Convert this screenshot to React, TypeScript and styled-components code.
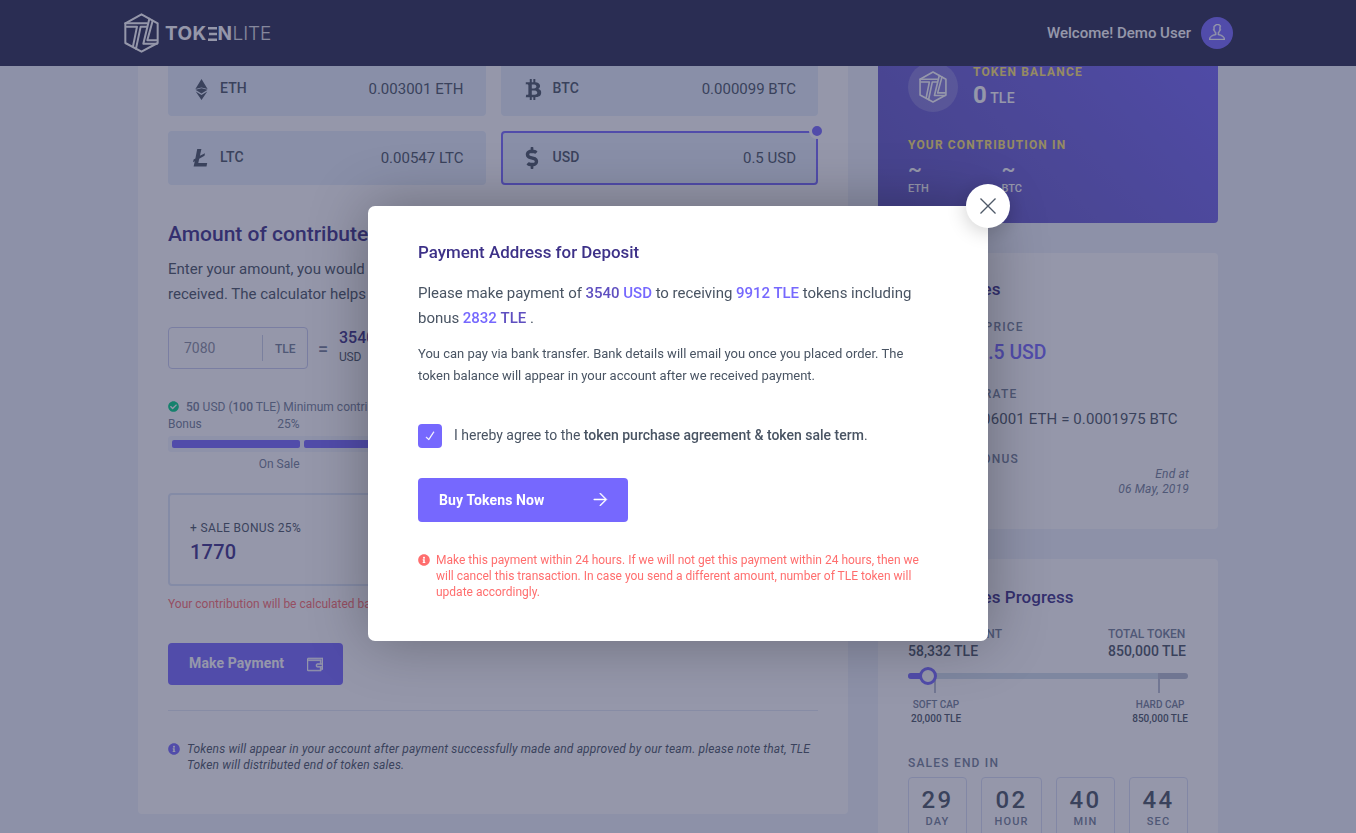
import React from "react";
import styled, { createGlobalStyle } from "styled-components";
import { FaBtc, FaDollarSign, FaInfoCircle, FaCheckCircle } from "react-icons/fa";
import { TfiUser, TfiWallet, TfiArrowRight, TfiClose, TfiCheck } from "react-icons/tfi";

const color = {
  primary: "#7668fe",
  heading: "#3d3188",
  text: "#495463",
  muted: "#728096",
  danger: "#ff6e6e",
  page: "#eef3fb",
  tile: "#e6effb",
  gold: "#ffe66d",
};

const GlobalStyle = createGlobalStyle`
  *, *::before, *::after { box-sizing: border-box; }
  html, body { margin: 0; height: 833px; overflow: hidden; }
  body { background: ${color.page}; color: ${color.text}; font-family: Roboto, sans-serif; font-size: 14px; }
  p, h2, h3, h4 { margin: 0; }
  svg { display: block; flex: none; }
`;

const Header = styled.header`
  position: fixed;
  inset: 0 0 auto 0;
  z-index: 2;
  height: 66px;
  background: #292a50;
  display: flex;
  justify-content: center;
`;
const HeaderInner = styled.div`
  width: 1110px;
  display: flex;
  align-items: center;
  justify-content: space-between;
  color: #fff;
`;
const Brand = styled.div`
  display: flex;
  align-items: center;
  gap: 6px;
  padding-left: 1px;
`;
const Wordmark = styled.div`
  display: flex;
  align-items: center;
  padding-top: 1px;
  font: 700 19px/20px Inter, sans-serif;
`;
const BoldWord = styled.span`
  letter-spacing: 0.4px;
`;
const LightWord = styled.span`
  font-weight: 300;
  opacity: 0.85;
  letter-spacing: -0.1px;
  margin-left: 0.5px;
`;
const TripleBar = styled.svg`
  margin: 0 1px 0 1px;
`;
const UserArea = styled.div`
  display: flex;
  align-items: center;
  gap: 10px;
  font-size: 15px;
  font-weight: 500;
`;
const Avatar = styled.div`
  width: 32px;
  height: 32px;
  border-radius: 50%;
  background: ${color.primary};
  display: grid;
  place-items: center;
  svg { stroke-width: 0.5; margin-bottom: 2px; }
`;

const Page = styled.main`
  display: grid;
  grid-template-columns: 710px 340px;
  gap: 30px;
  justify-content: center;
  align-items: start;
  height: 833px;
  overflow: hidden;
`;
const MainCard = styled.section`
  height: 814px;
  background: #fff;
  border-radius: 0 0 4px 4px;
  padding: 62px 30px 0;
`;

const Tiles = styled.div`
  display: grid;
  grid-template-columns: 1fr 1fr;
  gap: 15px;
`;
const Tile = styled.div<{ $selected?: boolean }>`
  position: relative;
  height: 54px;
  border-radius: 4px;
  background: ${color.tile};
  border: 2px solid ${(p) => (p.$selected ? color.primary : color.tile)};
  padding: 0 20px;
  display: flex;
  align-items: center;
`;
const TileIcon = styled.span<{ $shift?: number }>`
  width: 21px;
  display: flex;
  justify-content: center;
  svg { margin-left: ${(p) => p.$shift ?? 0}px; }
`;
const TileName = styled.span`
  flex: 1;
  margin-left: 9px;
  font-weight: 500;
  line-height: 18px;
  letter-spacing: 0.1px;
  padding-bottom: 2px;
`;
const TileRate = styled.span`
  font-size: 15px;
`;
const SelectedDot = styled.i`
  position: absolute;
  right: -9px;
  top: -10px;
  width: 16px;
  height: 16px;
  border-radius: 50%;
  border: 3px solid #fff;
  background: ${color.primary};
`;

const AmountTitle = styled.h2`
  margin-top: 35px;
  font-size: 21px;
  line-height: 28px;
  font-weight: 500;
  color: ${color.heading};
  white-space: nowrap;
`;
const Lead = styled.p`
  margin-top: 9px;
  font-size: 15px;
  line-height: 25px;
  white-space: nowrap;
`;
const CalcRow = styled.div`
  margin-top: 20px;
  height: 42px;
  display: flex;
  align-items: center;
`;
const AmountField = styled.div`
  width: 140px;
  height: 42px;
  border: 1px solid #c8cdee;
  border-radius: 4px;
  display: flex;
  align-items: center;
  padding-left: 15px;
  color: #8a8fa0;
`;
const FieldUnit = styled.span`
  margin-left: auto;
  width: 45px;
  height: 26px;
  border-left: 1px solid #c8d0e6;
  font-size: 12px;
  font-weight: 500;
  color: ${color.muted};
  display: flex;
  align-items: center;
  padding: 2px 0 0 12px;
`;
const EqualSign = styled.span`
  margin: 0 10px 0;
  font-size: 18px;
  font-weight: 500;
  width: 11px;
  color: ${color.muted};
`;
const Converted = styled.div`
  font-size: 12px;
  line-height: 19px;
  letter-spacing: -0.2px;
  padding-bottom: 2px;
  strong {
    display: block;
    font-size: 16px;
    line-height: 21px;
    font-weight: 500;
    letter-spacing: 0;
    color: ${color.heading};
  }
`;
const MinNote = styled.p`
  margin-top: 29px;
  display: flex;
  align-items: center;
  font-size: 12px;
  line-height: 18px;
  color: ${color.muted};
  white-space: pre;
  svg { color: #00d285; margin: 0 7px 1px 0; }
  b { font-weight: 500; }
`;
const BonusScale = styled.div`
  display: grid;
  grid-template-columns: 131.5px 1fr;
  font-size: 12px;
  line-height: 18px;
  color: ${color.muted};
`;
const ScaleHead = styled.div`
  display: flex;
  justify-content: space-between;
  margin-top: -1px;
`;
const ScaleFoot = styled.div`
  text-align: right;
`;
const BonusBar = styled.div`
  margin: 3px 0;
  height: 16px;
  padding: 4px;
  border-radius: 3px;
  background: #f1f4fd;
  display: flex;
  gap: 4px;
`;
const BonusSegment = styled.i<{ $wide?: boolean }>`
  width: ${(p) => (p.$wide ? "auto" : "128px")};
  flex: ${(p) => (p.$wide ? 1 : "none")};
  border-radius: 2px;
  background: ${color.primary};
`;
const BonusBox = styled.div`
  margin-top: 20px;
  height: 93px;
  border: 2px solid #dde6f6;
  border-radius: 4px;
  padding: 24px 20px 0;
  font-size: 12px;
  line-height: 18px;
  letter-spacing: 0.35px;
  strong {
    display: block;
    margin-top: 1px;
    font-size: 20px;
    line-height: 28px;
    font-weight: 500;
    letter-spacing: 0.2px;
    color: ${color.heading};
  }
`;
const ContributionNote = styled.p`
  margin-top: 9px;
  font-size: 12px;
  line-height: 18px;
  color: ${color.danger};
`;

const Button = styled.button<{ $width: number; $height: number }>`
  border: 0;
  border-radius: 4px;
  width: ${(p) => p.$width}px;
  height: ${(p) => p.$height}px;
  padding: 0 20px 0 21px;
  background: ${color.primary};
  color: #fff;
  font: 700 14px/20px Roboto, sans-serif;
  letter-spacing: 0.12px;
  display: flex;
  align-items: center;
  justify-content: space-between;
`;
const PayButton = styled(Button)`
  margin-top: 30px;
  padding-bottom: 2px;
  svg { stroke-width: 0.55; margin-top: 2px; }
`;
const Divider = styled.hr`
  margin: 25px 0 0;
  border: 0;
  height: 1px;
  background: #e3e9f5;
`;
const TokenNote = styled.p`
  margin-top: 30px;
  display: flex;
  gap: 7px;
  font-size: 12px;
  line-height: 16px;
  font-style: italic;
  letter-spacing: 0.155px;
  white-space: nowrap;
  svg { color: ${color.primary}; margin-top: 2px; }
`;

const Side = styled.aside`
  display: flex;
  flex-direction: column;
`;
const BalanceCard = styled.section`
  height: 223px;
  padding: 62px 30px 0;
  border-radius: 0 0 4px 4px;
  color: #fff;
  background: linear-gradient(45deg, #5f55c0 0%, #6a5ed6 40%, #7668fe 100%);
`;
const BalanceHead = styled.div`
  display: flex;
  gap: 15px;
  height: 75px;
`;
const TokenBadge = styled.div`
  width: 50px;
  height: 50px;
  border-radius: 50%;
  background: rgba(255, 255, 255, 0.2);
  display: grid;
  place-items: center;
`;
const BalanceInfo = styled.div`
  padding-top: 2px;
`;
const GoldLabel = styled.h4`
  font-size: 12px;
  line-height: 16px;
  font-weight: 700;
  letter-spacing: 1.15px;
  color: ${color.gold};
`;
const Balance = styled.div`
  margin-top: 2px;
  font-size: 14px;
  line-height: 26px;
  font-weight: 500;
  letter-spacing: 0.2px;
  b { font-size: 24px; font-weight: 700; letter-spacing: 0; }
`;
const Contributions = styled.div`
  display: grid;
  grid-template-columns: 93.5px 1fr;
  margin-top: 10px;
  font-size: 11px;
  line-height: 14px;
  font-weight: 500;
  b { display: block; font-size: 21px; line-height: 12px; margin-bottom: 7px; font-weight: 500; }
`;

const SideCard = styled.section<{ $height: number; $top: number }>`
  margin-top: 30px;
  height: ${(p) => p.$height}px;
  flex: none;
  padding: ${(p) => p.$top}px 30px 0;
  background: #fff;
  border-radius: 4px;
`;
const SideTitle = styled.h3`
  font-size: 17px;
  line-height: 20px;
  padding-bottom: 2px;
  font-weight: 500;
  letter-spacing: 0.05px;
  color: ${color.heading};
`;
const Label = styled.h4<{ $top: number }>`
  margin-top: ${(p) => p.$top}px;
  font-size: 12px;
  line-height: 16px;
  font-weight: 500;
  letter-spacing: 1.2px;
  color: ${color.muted};
`;
const Price = styled.div`
  margin-top: 4px;
  font-size: 19.4px;
  line-height: 28px;
  font-weight: 500;
  color: ${color.primary};
`;
const Rate = styled.div`
  margin: 5px 0 0 -1px;
  font-size: 15px;
  line-height: 24px;
  letter-spacing: 0.11px;
  white-space: nowrap;
`;
const BonusRow = styled.div`
  display: flex;
  justify-content: space-between;
`;
const BonusValue = styled.b`
  font-size: 19px;
  font-weight: 500;
  color: ${color.primary};
  margin-top: 4px;
`;
const EndDate = styled.div`
  text-align: right;
  font-size: 12px;
  line-height: 15px;
  font-style: italic;
  letter-spacing: 0.17px;
  color: ${color.muted};
  margin-right: -1px;
`;

const Totals = styled.div`
  display: flex;
  justify-content: space-between;
  margin-top: 17px;
  font-size: 12px;
  line-height: 16px;
  font-weight: 500;
  color: ${color.muted};
  div:last-child { margin-right: 2px; }
  b { display: block; font-size: 14px; line-height: 19px; font-weight: 500; color: ${color.text}; }
`;
const Track = styled.div`
  position: relative;
  margin-top: 12px;
  height: 6px;
  border-radius: 3px;
  background: linear-gradient(90deg, #d0deea 0 251px, #b4bccf 251px);
`;
const TrackFill = styled.i`
  display: block;
  width: 20px;
  height: 6px;
  border-radius: 3px;
  background: ${color.primary};
`;
const Tick = styled.i<{ $left: number; $top: number }>`
  position: absolute;
  left: ${(p) => p.$left}px;
  top: ${(p) => p.$top}px;
  width: 2px;
  height: ${(p) => 20 - p.$top}px;
  background: #b8bed0;
`;
const Knob = styled.i`
  position: absolute;
  left: 11px;
  top: -6px;
  width: 18px;
  height: 18px;
  border-radius: 50%;
  border: 3px solid ${color.primary};
  background: #fff;
`;
const Caps = styled.div`
  margin-top: 19px;
  padding-left: 3px;
  display: flex;
  justify-content: space-between;
  text-align: center;
  font-size: 10px;
  line-height: 14px;
  font-weight: 500;
  color: ${color.muted};
  b { display: block; font-weight: 500; color: ${color.text}; }
`;
const Countdown = styled.div`
  display: grid;
  grid-template-columns: 59px 61px 59px 59px;
  justify-content: space-between;
  margin-top: 6px;
`;
const TimeBox = styled.div`
  height: 60px;
  border: 1px solid #d8dff5;
  border-radius: 4px 4px 0 0;
  padding-top: 8px;
  text-align: center;
  font-size: 11px;
  line-height: 14px;
  font-weight: 500;
  letter-spacing: 1.1px;
  color: ${color.muted};
  b { display: block; font-size: 24px; line-height: 28px; padding-bottom: 1px; font-weight: 500; letter-spacing: 2.4px; color: ${color.text}; }
`;

const Overlay = styled.div`
  position: fixed;
  inset: 0;
  z-index: 5;
  background: rgba(44, 48, 86, 0.5);
  display: flex;
  justify-content: center;
  align-items: flex-start;
  padding-top: 206px;
`;
const Dialog = styled.div`
  position: relative;
  width: 620px;
  height: 435px;
  border-radius: 7px;
  background: #fff;
  padding: 36px 50px 0;
  box-shadow: 0 0 60px rgba(0, 0, 0, 0.3);
`;
const Close = styled.button`
  position: absolute;
  right: -22px;
  top: -22px;
  width: 44px;
  height: 44px;
  border: 0;
  border-radius: 50%;
  background: #fff;
  color: ${color.text};
  display: grid;
  place-items: center;
  box-shadow: 0 3px 20px rgba(0, 0, 0, 0.2);
  svg { stroke-width: 0.3; }
`;
const DialogTitle = styled.h3`
  font-size: 16.9px;
  line-height: 20px;
  padding-bottom: 2px;
  font-weight: 500;
  color: ${color.heading};
`;
const DialogLead = styled.p`
  margin-top: 17px;
  font-size: 15px;
  line-height: 25px;
  letter-spacing: -0.025px;
`;
const Strong = styled.strong<{ $dark?: boolean }>`
  font-weight: 500;
  color: ${(p) => (p.$dark ? "#5f4fc0" : color.primary)};
`;
const DialogText = styled.p`
  margin-top: 12px;
  font-size: 13px;
  line-height: 22px;
  white-space: nowrap;
`;
const Agree = styled.label`
  margin-top: 37px;
  display: flex;
  align-items: center;
  gap: 12px;
  font-size: 14px;
  height: 24px;
  b { font-weight: 500; }
`;
const AgreeText = styled.span`
  padding-bottom: 2px;
`;
const CheckBox = styled.span`
  width: 24px;
  height: 24px;
  border-radius: 4px;
  background: ${color.primary};
  color: #fff;
  display: grid;
  place-items: center;
  svg { stroke-width: 1.1; }
`;
const BuyButton = styled(Button)`
  margin-top: 30px;
  svg { stroke-width: 0.7; margin-bottom: 2px; }
`;
const Warning = styled.p`
  margin-top: 30px;
  display: flex;
  gap: 6px;
  font-size: 12px;
  line-height: 16px;
  color: ${color.danger};
  white-space: nowrap;
  svg { margin-top: 2px; }
`;

const TokenMark = ({ width, height }: { width: number; height: number }) => (
  <svg width={width} height={height} viewBox="0 0 105 120" fill="none" stroke="currentColor" strokeWidth="6" strokeLinejoin="round" strokeLinecap="round">
    <path d="M52.5 4 101 31V90L52.5 116 4 90V31Z" />
    <path d="M4 31H69" />
    <path d="M8 41H39L27 100" />
    <path d="M69 41H50L36 107" />
    <path d="M76 17 58 92H99" />
    <path d="M86 23 70 82H99" />
  </svg>
);

const EthIcon = () => (
  <svg width="13" height="21" viewBox="0 0 13 21" fill="currentColor">
    <path d="M6.5 0 12.6 10 6.5 8.6 .4 10Z" />
    <path d="M6.5 9.2 12.6 10.8 6.5 14.4 .4 10.8Z" />
    <path d="M.7 12.6 6.5 16 12.3 12.6 6.5 21Z" />
  </svg>
);

const LtcIcon = () => (
  <svg width="15" height="18" viewBox="0 0 15 18" fill="currentColor">
    <path d="M4.2 0H8.4L6.9 6.8 12 4.2 11.5 6.7 6.2 9.8 5.3 13.9H14.2L13.5 17.5H.6L1.8 12.3 0 13.2 .6 10.6 2.4 9.6Z" />
  </svg>
);

const methods = [
  { name: "ETH", rate: "0.003001 ETH", icon: <EthIcon />, shift: 1 },
  { name: "BTC", rate: "0.000099 BTC", icon: <FaBtc size={21} /> },
  { name: "LTC", rate: "0.00547 LTC", icon: <LtcIcon /> },
  { name: "USD", rate: "0.5 USD", icon: <FaDollarSign size={22} />, selected: true, shift: -2 },
];

const countdown = [
  ["29", "Day"],
  ["02", "Hour"],
  ["40", "Min"],
  ["44", "Sec"],
];

export default function App() {
  return (
    <>
      <GlobalStyle />
      <Header>
        <HeaderInner>
          <Brand>
            <TokenMark width={35} height={40} />
            <Wordmark>
              <BoldWord>TOK</BoldWord>
              <TripleBar width="9" height="14" viewBox="0 0 9 14" fill="currentColor">
                <path d="M0 0H9V2.6H0ZM1 5.7H9V8.3H1ZM0 11.4H9V14H0Z" />
              </TripleBar>
              N<LightWord>LITE</LightWord>
            </Wordmark>
          </Brand>
          <UserArea>
            Welcome! Demo User
            <Avatar><TfiUser size={16} stroke="currentColor" /></Avatar>
          </UserArea>
        </HeaderInner>
      </Header>

      <Page>
        <MainCard>
          <Tiles>
            {methods.map((m) => (
              <Tile key={m.name} $selected={m.selected}>
                <TileIcon $shift={m.shift}>{m.icon}</TileIcon>
                <TileName>{m.name}</TileName>
                <TileRate>{m.rate}</TileRate>
                {m.selected && <SelectedDot />}
              </Tile>
            ))}
          </Tiles>
          <AmountTitle>Amount of contribute</AmountTitle>
          <Lead>
            Enter your amount, you would<br />received. The calculator helps
          </Lead>
          <CalcRow>
            <AmountField>7080<FieldUnit>TLE</FieldUnit></AmountField>
            <EqualSign>=</EqualSign>
            <Converted><strong>3540</strong>USD</Converted>
          </CalcRow>
          <MinNote>
            <FaCheckCircle size={11} /><b>50</b> USD (<b>100</b> TLE) Minimum contribution
          </MinNote>
          <BonusScale>
            <ScaleHead><span>Bonus</span><span>25%</span></ScaleHead>
          </BonusScale>
          <BonusBar><BonusSegment /><BonusSegment $wide /></BonusBar>
          <BonusScale><ScaleFoot>On Sale</ScaleFoot></BonusScale>
          <BonusBox>+ SALE BONUS 25%<strong>1770</strong></BonusBox>
          <ContributionNote>Your contribution will be calculated based</ContributionNote>
          <PayButton $width={175} $height={42}>Make Payment<TfiWallet size={16} stroke="currentColor" /></PayButton>
          <Divider />
          <TokenNote>
            <FaInfoCircle size={12} />
            <span>
              Tokens will appear in your account after payment successfully made and approved by our team. please note that, TLE
              <br />Token will distributed end of token sales.
            </span>
          </TokenNote>
        </MainCard>

        <Side>
          <BalanceCard>
            <BalanceHead>
              <TokenBadge><TokenMark width={28} height={32} /></TokenBadge>
              <BalanceInfo>
                <GoldLabel>TOKEN BALANCE</GoldLabel>
                <Balance><b>0</b> TLE</Balance>
              </BalanceInfo>
            </BalanceHead>
            <GoldLabel>YOUR CONTRIBUTION IN</GoldLabel>
            <Contributions>
              <div><b>~</b>ETH</div>
              <div><b>~</b>BTC</div>
            </Contributions>
          </BalanceCard>

          <SideCard $height={276} $top={26}>
            <SideTitle>Token Sales</SideTitle>
            <Label $top={18}>TLE TOKEN PRICE</Label>
            <Price>1 TLE = 0.5 USD</Price>
            <Label $top={19}>EXCHANGE RATE</Label>
            <Rate>1 TLE = 0.006001 ETH = 0.0001975 BTC</Rate>
            <Label $top={20}>CURRENT BONUS</Label>
            <BonusRow>
              <BonusValue>20%</BonusValue>
              <EndDate>End at<br />06 May, 2019</EndDate>
            </BonusRow>
          </SideCard>

          <SideCard $height={320} $top={28}>
            <SideTitle>Token Sales Progress</SideTitle>
            <Totals>
              <div>RAISED AMOUNT<b>58,332 TLE</b></div>
              <div>TOTAL TOKEN<b>850,000 TLE</b></div>
            </Totals>
            <Track>
              <TrackFill />
              <Tick $left={26} $top={6} />
              <Tick $left={250} $top={0} />
              <Knob />
            </Track>
            <Caps>
              <div>SOFT CAP<b>20,000 TLE</b></div>
              <div>HARD CAP<b>850,000 TLE</b></div>
            </Caps>
            <Label $top={29}>SALES END IN</Label>
            <Countdown>
              {countdown.map(([n, unit]) => (
                <TimeBox key={unit}><b>{n}</b>{unit.toUpperCase()}</TimeBox>
              ))}
            </Countdown>
          </SideCard>
        </Side>
      </Page>

      <Overlay>
        <Dialog role="dialog">
          <Close aria-label="Close"><TfiClose size={18} stroke="currentColor" /></Close>
          <DialogTitle>Payment Address for Deposit</DialogTitle>
          <DialogLead>
            Please make payment of <Strong $dark>3540</Strong> <Strong>USD</Strong> to receiving <Strong>9912 TLE</Strong> tokens including
            bonus <Strong>2832</Strong> <Strong $dark>TLE</Strong> .
          </DialogLead>
          <DialogText>
            You can pay via bank transfer. Bank details will email you once you placed order. The<br />
            token balance will appear in your account after we received payment.
          </DialogText>
          <Agree>
            <CheckBox><TfiCheck size={10} stroke="currentColor" /></CheckBox>
            <AgreeText>I hereby agree to the <b>token purchase agreement &amp; token sale term</b>.</AgreeText>
          </Agree>
          <BuyButton $width={210} $height={44}>Buy Tokens Now<TfiArrowRight size={15} stroke="currentColor" /></BuyButton>
          <Warning>
            <FaInfoCircle size={12} />
            <span>
              Make this payment within 24 hours. If we will not get this payment within 24 hours, then we<br />
              will cancel this transaction. In case you send a different amount, number of TLE token will<br />
              update accordingly.
            </span>
          </Warning>
        </Dialog>
      </Overlay>
    </>
  );
}
